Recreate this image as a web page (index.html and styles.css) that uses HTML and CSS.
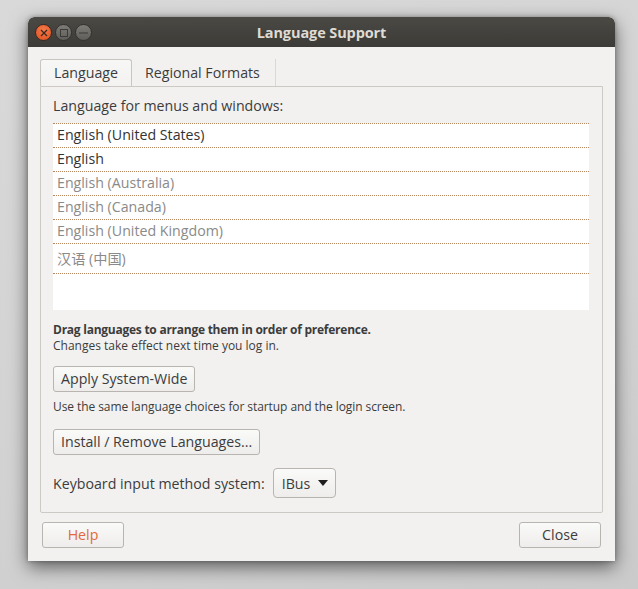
FILE: index.html
```html
<!DOCTYPE html>
<html lang="en">
<head>
<meta charset="UTF-8">
<title>Language Support</title>
<link rel="stylesheet" href="styles.css">
</head>
<body>

<div class="window">
    <div class="titlebar">
        <div class="title-buttons">
            <span class="tbtn tbtn-close">
                <svg width="8" height="8" viewBox="0 0 8 8"><path d="M1 1L7 7M7 1L1 7" stroke="#3a2a22" stroke-width="1.3"/></svg>
            </span>
            <span class="tbtn">
                <svg width="8" height="8" viewBox="0 0 8 8"><rect x="0.5" y="0.5" width="7" height="7" fill="none" stroke="#3c3b37" stroke-width="1"/></svg>
            </span>
            <span class="tbtn">
                <svg width="9" height="8" viewBox="0 0 9 8"><path d="M0 4H9" stroke="#3c3b37" stroke-width="1.2"/></svg>
            </span>
        </div>
        <div class="title">Language Support</div>
        <div></div>
    </div>

    <div class="content">
        <div class="tabs">
            <div class="tab active">Language</div>
            <div class="tab tab-last">Regional Formats</div>
        </div>
        <div class="panel">
            <div class="label">Language for menus and windows:</div>
            <div class="lang-list">
                <div class="lang-row">English (United States)</div>
                <div class="lang-row">English</div>
                <div class="lang-row dim">English (Australia)</div>
                <div class="lang-row dim">English (Canada)</div>
                <div class="lang-row dim">English (United Kingdom)</div>
                <div class="lang-row dim cjk">汉语 (中国)</div>
                <div class="lang-fill"></div>
            </div>
            <div class="hint">
                <div class="hint-bold">Drag languages to arrange them in order of preference.</div>
                <div>Changes take effect next time you log in.</div>
            </div>
            <button class="btn btn-apply">Apply System-Wide</button>
            <div class="hint hint-single">Use the same language choices for startup and the login screen.</div>
            <button class="btn btn-install">Install / Remove Languages...</button>
            <div class="input-row">
                <span>Keyboard input method system:</span>
                <span class="combo"><span>IBus</span>
                    <svg width="10" height="6" viewBox="0 0 10 6"><path d="M0 0H10L5 6Z" fill="#1e1e1e"/></svg>
                </span>
            </div>
        </div>
        <div class="footer">
            <button class="btn btn-foot btn-help">Help</button>
            <button class="btn btn-foot">Close</button>
        </div>
    </div>
</div>

</body>
</html>
```

FILE: styles.css
```css
body {
    margin: 0;
    padding: 0;
    width: 638px;
    height: 589px;
    overflow: hidden;
    background: linear-gradient(160deg, #d9d9d9 0%, #d2d2d2 60%, #cbcbcb 100%);
    font-family: "Open Sans", "Noto Sans CJK SC", sans-serif;
    color: #3c3c3c;
}
.window {
    width: 587px;
    height: 544px;
    margin: 17px 0 0 28px;
    background-color: #f2f1f0;
    border-radius: 6px 6px 0 0;
    box-shadow: 0 6px 18px rgba(0, 0, 0, 0.55), 0 0 4px rgba(0, 0, 0, 0.3);
    display: flex;
    flex-direction: column;
    overflow: hidden;
}
.titlebar {
    flex-shrink: 0;
    height: 30px;
    background: linear-gradient(#4a4944, #3c3b37);
    border-radius: 6px 6px 0 0;
    display: grid;
    grid-template-columns: 1fr auto 1fr;
    align-items: center;
}
.title-buttons {
    display: flex;
    gap: 3px;
    padding-left: 7px;
    padding-top: 1px;
}
.tbtn {
    width: 15px;
    height: 15px;
    border-radius: 50%;
    background: linear-gradient(#7d7c77, #5e5d59);
    border: 1px solid #34332f;
    display: flex;
    align-items: center;
    justify-content: center;
}
.tbtn-close {
    background: radial-gradient(circle at 50% 35%, #f47a4a, #e0501f);
    border-color: #3a2a22;
}
.title {
    color: #dfdbd2;
    font-weight: bold;
    font-size: 14.5px;
    letter-spacing: -0.1px;
}
.content {
    flex: 1;
    display: flex;
    flex-direction: column;
    padding: 12px 12px 0 12px;
}
.content > * {
    flex-shrink: 0;
}
.tabs {
    display: flex;
    height: 27px;
}
.tab {
    padding: 0 13px;
    font-size: 14.2px;
    line-height: 27px;
    border-right: 1px solid #dcd9d5;
    color: #3c3c3c;
}
.tab-last {
    padding-right: 15px;
}
.tab.active {
    background: linear-gradient(#f7f7f6, #f3f2f1);
    border: 1px solid #c9c6c2;
    border-bottom: none;
    border-radius: 3px 3px 0 0;
    line-height: 26px;
}
.panel {
    border: 1px solid #cdcac6;
    border-radius: 0 0 2px 2px;
    padding: 9px 13px 14px 12px;
    display: flex;
    flex-direction: column;
    align-items: flex-start;
    font-size: 14.2px;
}
.panel > * {
    flex-shrink: 0;
}
.label {
    line-height: 20px;
}
.lang-list {
    align-self: stretch;
    margin-top: 7px;
    height: 187px;
    box-sizing: border-box;
    background-color: #fff;
    border-top: 1px dotted #b8865e;
    display: flex;
    flex-direction: column;
}
.lang-row {
    flex-shrink: 0;
    height: 23px;
    line-height: 22px;
    padding-left: 4px;
    border-bottom: 1px dotted #b8865e;
    color: #333;
}
.lang-row.dim {
    color: #8a8a8a;
}
.lang-row.cjk {
    height: 29px;
    line-height: 29px;
}
.lang-fill {
    flex: 1;
}
.hint {
    font-size: 12px;
    line-height: 16px;
    margin-top: 12px;
    color: #3c3c3c;
}
.hint-bold {
    font-weight: bold;
    letter-spacing: -0.25px;
}
.hint-single {
    margin-top: 7px;
    letter-spacing: -0.08px;
}
.btn {
    font-family: inherit;
    font-size: 14.2px;
    color: #3c3c3c;
    background: linear-gradient(#fafaf9, #eeedec);
    border: 1px solid #b8b5b1;
    border-radius: 3px;
    height: 26px;
    padding: 0 7px;
    line-height: 24px;
}
.btn-apply {
    margin-top: 12px;
}
.btn-install {
    margin-top: 14px;
}
.input-row {
    margin-top: 13px;
    height: 30px;
    display: flex;
    align-items: center;
    gap: 8px;
}
.combo {
    height: 30px;
    width: 63px;
    box-sizing: border-box;
    border: 1px solid #b8b5b1;
    border-radius: 4px;
    background: linear-gradient(#fafaf9, #eeedec);
    display: flex;
    align-items: center;
    justify-content: space-between;
    padding: 0 7px 0 8px;
}
.footer {
    margin-top: 9px;
    padding: 0 2px;
    display: flex;
    justify-content: space-between;
}
.btn-foot {
    width: 82px;
    height: 26px;
}
.btn-help {
    color: #e2683a;
}
```
